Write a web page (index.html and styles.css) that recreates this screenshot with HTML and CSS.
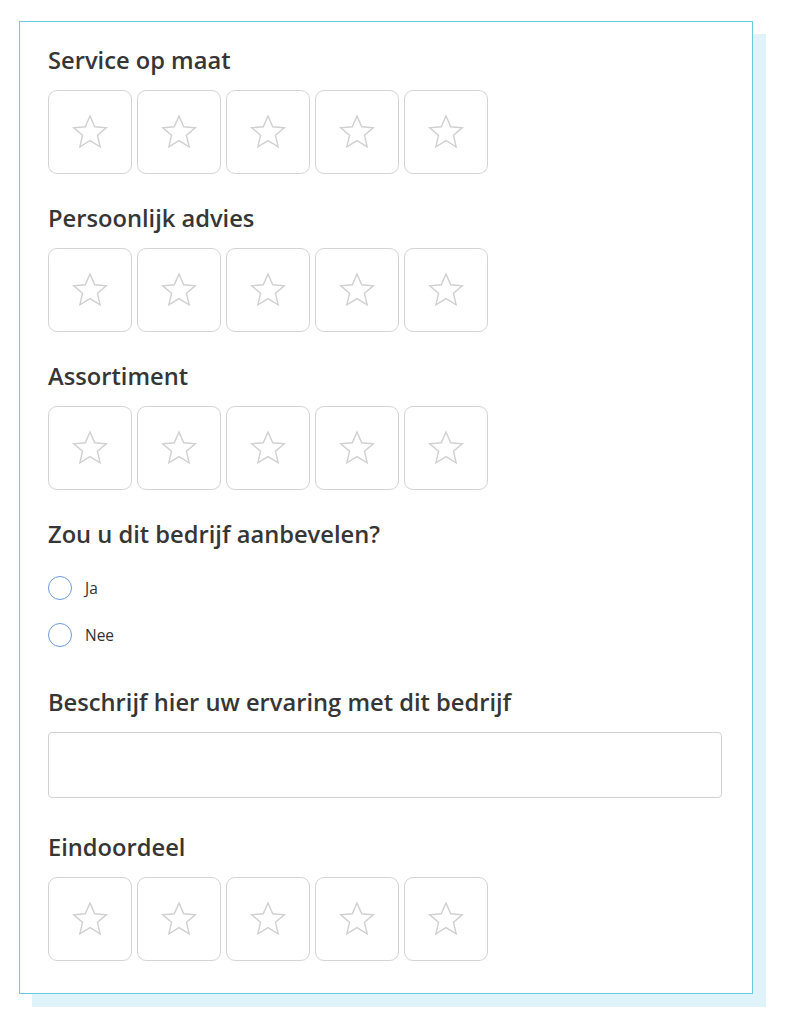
FILE: index.html
```html
<!DOCTYPE html>
<html lang="nl">
<head>
<meta charset="utf-8">
<title>Beoordeling</title>
<link rel="stylesheet" href="styles.css">
</head>
<body>
<div class="page">
  <form class="card">
    <section class="field">
      <h2 class="label">Service op maat</h2>
      <div class="stars">
        <button type="button" class="star"><svg viewBox="0 0 40 40"><path d="M20 5.5 L24.3 15.3 L34.8 16.1 L26.8 23 L29.2 33.4 L20 27.9 L10.8 33.4 L13.2 23 L5.2 16.1 L15.7 15.3 Z"/></svg></button>
        <button type="button" class="star"><svg viewBox="0 0 40 40"><path d="M20 5.5 L24.3 15.3 L34.8 16.1 L26.8 23 L29.2 33.4 L20 27.9 L10.8 33.4 L13.2 23 L5.2 16.1 L15.7 15.3 Z"/></svg></button>
        <button type="button" class="star"><svg viewBox="0 0 40 40"><path d="M20 5.5 L24.3 15.3 L34.8 16.1 L26.8 23 L29.2 33.4 L20 27.9 L10.8 33.4 L13.2 23 L5.2 16.1 L15.7 15.3 Z"/></svg></button>
        <button type="button" class="star"><svg viewBox="0 0 40 40"><path d="M20 5.5 L24.3 15.3 L34.8 16.1 L26.8 23 L29.2 33.4 L20 27.9 L10.8 33.4 L13.2 23 L5.2 16.1 L15.7 15.3 Z"/></svg></button>
        <button type="button" class="star"><svg viewBox="0 0 40 40"><path d="M20 5.5 L24.3 15.3 L34.8 16.1 L26.8 23 L29.2 33.4 L20 27.9 L10.8 33.4 L13.2 23 L5.2 16.1 L15.7 15.3 Z"/></svg></button>
      </div>
    </section>
    <section class="field">
      <h2 class="label">Persoonlijk advies</h2>
      <div class="stars">
        <button type="button" class="star"><svg viewBox="0 0 40 40"><path d="M20 5.5 L24.3 15.3 L34.8 16.1 L26.8 23 L29.2 33.4 L20 27.9 L10.8 33.4 L13.2 23 L5.2 16.1 L15.7 15.3 Z"/></svg></button>
        <button type="button" class="star"><svg viewBox="0 0 40 40"><path d="M20 5.5 L24.3 15.3 L34.8 16.1 L26.8 23 L29.2 33.4 L20 27.9 L10.8 33.4 L13.2 23 L5.2 16.1 L15.7 15.3 Z"/></svg></button>
        <button type="button" class="star"><svg viewBox="0 0 40 40"><path d="M20 5.5 L24.3 15.3 L34.8 16.1 L26.8 23 L29.2 33.4 L20 27.9 L10.8 33.4 L13.2 23 L5.2 16.1 L15.7 15.3 Z"/></svg></button>
        <button type="button" class="star"><svg viewBox="0 0 40 40"><path d="M20 5.5 L24.3 15.3 L34.8 16.1 L26.8 23 L29.2 33.4 L20 27.9 L10.8 33.4 L13.2 23 L5.2 16.1 L15.7 15.3 Z"/></svg></button>
        <button type="button" class="star"><svg viewBox="0 0 40 40"><path d="M20 5.5 L24.3 15.3 L34.8 16.1 L26.8 23 L29.2 33.4 L20 27.9 L10.8 33.4 L13.2 23 L5.2 16.1 L15.7 15.3 Z"/></svg></button>
      </div>
    </section>
    <section class="field">
      <h2 class="label">Assortiment</h2>
      <div class="stars">
        <button type="button" class="star"><svg viewBox="0 0 40 40"><path d="M20 5.5 L24.3 15.3 L34.8 16.1 L26.8 23 L29.2 33.4 L20 27.9 L10.8 33.4 L13.2 23 L5.2 16.1 L15.7 15.3 Z"/></svg></button>
        <button type="button" class="star"><svg viewBox="0 0 40 40"><path d="M20 5.5 L24.3 15.3 L34.8 16.1 L26.8 23 L29.2 33.4 L20 27.9 L10.8 33.4 L13.2 23 L5.2 16.1 L15.7 15.3 Z"/></svg></button>
        <button type="button" class="star"><svg viewBox="0 0 40 40"><path d="M20 5.5 L24.3 15.3 L34.8 16.1 L26.8 23 L29.2 33.4 L20 27.9 L10.8 33.4 L13.2 23 L5.2 16.1 L15.7 15.3 Z"/></svg></button>
        <button type="button" class="star"><svg viewBox="0 0 40 40"><path d="M20 5.5 L24.3 15.3 L34.8 16.1 L26.8 23 L29.2 33.4 L20 27.9 L10.8 33.4 L13.2 23 L5.2 16.1 L15.7 15.3 Z"/></svg></button>
        <button type="button" class="star"><svg viewBox="0 0 40 40"><path d="M20 5.5 L24.3 15.3 L34.8 16.1 L26.8 23 L29.2 33.4 L20 27.9 L10.8 33.4 L13.2 23 L5.2 16.1 L15.7 15.3 Z"/></svg></button>
      </div>
    </section>
    <section class="field">
      <h2 class="label">Zou u dit bedrijf aanbevelen?</h2>
      <div class="radios">
        <label class="radio"><span class="dot"></span><span class="radio-text">Ja</span></label>
        <label class="radio"><span class="dot"></span><span class="radio-text">Nee</span></label>
      </div>
    </section>
    <section class="field">
      <h2 class="label">Beschrijf hier uw ervaring met dit bedrijf</h2>
      <div class="textbox"></div>
    </section>
    <section class="field">
      <h2 class="label">Eindoordeel</h2>
      <div class="stars">
        <button type="button" class="star"><svg viewBox="0 0 40 40"><path d="M20 5.5 L24.3 15.3 L34.8 16.1 L26.8 23 L29.2 33.4 L20 27.9 L10.8 33.4 L13.2 23 L5.2 16.1 L15.7 15.3 Z"/></svg></button>
        <button type="button" class="star"><svg viewBox="0 0 40 40"><path d="M20 5.5 L24.3 15.3 L34.8 16.1 L26.8 23 L29.2 33.4 L20 27.9 L10.8 33.4 L13.2 23 L5.2 16.1 L15.7 15.3 Z"/></svg></button>
        <button type="button" class="star"><svg viewBox="0 0 40 40"><path d="M20 5.5 L24.3 15.3 L34.8 16.1 L26.8 23 L29.2 33.4 L20 27.9 L10.8 33.4 L13.2 23 L5.2 16.1 L15.7 15.3 Z"/></svg></button>
        <button type="button" class="star"><svg viewBox="0 0 40 40"><path d="M20 5.5 L24.3 15.3 L34.8 16.1 L26.8 23 L29.2 33.4 L20 27.9 L10.8 33.4 L13.2 23 L5.2 16.1 L15.7 15.3 Z"/></svg></button>
        <button type="button" class="star"><svg viewBox="0 0 40 40"><path d="M20 5.5 L24.3 15.3 L34.8 16.1 L26.8 23 L29.2 33.4 L20 27.9 L10.8 33.4 L13.2 23 L5.2 16.1 L15.7 15.3 Z"/></svg></button>
      </div>
    </section>
  </form>
</div>
</body>
</html>
```

FILE: styles.css
```css
* { box-sizing: border-box; }

html, body {
  margin: 0;
  padding: 0;
  background: #ffffff;
}

body {
  font-family: "Open Sans", "Noto Sans", "Liberation Sans", sans-serif;
  color: #2e2e2e;
}

.page {
  padding: 21px 0 30px 19px;
}

.card {
  width: 734px;
  height: 973px;
  border: 1px solid #6ccbdb;
  background: #ffffff;
  box-shadow: 13px 13px 0 #e0f3fb;
  padding: 24px 0 0 28px;
  display: flex;
  flex-direction: column;
  gap: 30px;
}

.field {
  display: flex;
  flex-direction: column;
  gap: 16px;
}

.label {
  margin: 0;
  font-size: 23.7px;
  line-height: 28px;
  font-weight: 600;
  color: #363636;
  letter-spacing: 0;
}

.stars {
  display: flex;
  gap: 5px;
}

.star {
  width: 84px;
  height: 84px;
  border: 1.5px solid #d4d4d4;
  border-radius: 9px;
  background: #ffffff;
  padding: 0;
  display: flex;
  align-items: center;
  justify-content: center;
}

.star svg {
  width: 44px;
  height: 44px;
}

.star path {
  fill: none;
  stroke: #d0d0d0;
  stroke-width: 1.3;
  stroke-linejoin: miter;
}

.radios {
  display: flex;
  flex-direction: column;
  gap: 23px;
  padding-top: 12px;
  margin-bottom: 11px;
}

.radio {
  display: flex;
  align-items: center;
  gap: 13px;
  height: 24px;
}

.dot {
  width: 24px;
  height: 24px;
  border: 1.5px solid #6b9bd9;
  border-radius: 50%;
}

.radio-text {
  font-size: 15.5px;
  color: #333333;
}

.textbox {
  width: 674px;
  height: 66px;
  border: 1.5px solid #d2d2d2;
  border-radius: 4px;
  margin-bottom: 5px;
}
```
